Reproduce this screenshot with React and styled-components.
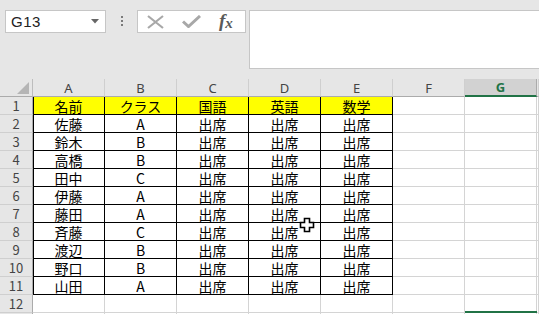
import React from 'react'
import styled, { createGlobalStyle } from 'styled-components'

const GlobalStyle = createGlobalStyle`
  html, body {
    margin: 0;
    padding: 0;
    background: #ffffff;
    overflow: hidden;
  }
`

const columns = ['A', 'B', 'C', 'D', 'E', 'F', 'G']

const header = ['名前', 'クラス', '国語', '英語', '数学']

const students = [
  ['佐藤', 'A'],
  ['鈴木', 'B'],
  ['高橋', 'B'],
  ['田中', 'C'],
  ['伊藤', 'A'],
  ['藤田', 'A'],
  ['斉藤', 'C'],
  ['渡辺', 'B'],
  ['野口', 'B'],
  ['山田', 'A'],
]

function Toolbar() {
  return (
    <Bar>
      <NameBox>
        <span>G13</span>
        <svg width="8" height="5" viewBox="0 0 8 5">
          <path d="M0 0 L8 0 L4 4.5 Z" fill="#666" />
        </svg>
      </NameBox>
      <Dots>
        <i />
        <i />
        <i />
      </Dots>
      <FormulaButtons>
        <svg width="17" height="14" viewBox="0 0 17 14">
          <path d="M1 1 L16 13 M16 1 L1 13" stroke="#a8a8a8" strokeWidth="2.2" fill="none" />
        </svg>
        <svg width="19" height="13" viewBox="0 0 19 13">
          <path d="M1 6.5 L6.5 11.5 L18 1" stroke="#a8a8a8" strokeWidth="3" fill="none" />
        </svg>
        <Fx>
          f<sub>x</sub>
        </Fx>
      </FormulaButtons>
      <FormulaInput />
    </Bar>
  )
}

function Sheet() {
  const rows = []
  // row 13 only peeks in by a pixel, so its number is left out
  for (let r = 1; r <= 13; r++) {
    let values = []
    if (r === 1) values = header
    else if (r <= 11) {
      const s = students[r - 2]
      values = [s[0], s[1], '出席', '出席', '出席']
    }
    rows.push(
      <React.Fragment key={r}>
        <RowHead>{r < 13 ? r : ''}</RowHead>
        {columns.map((c, i) => {
          const inTable = r <= 11 && i < 5
          return (
            <Cell
              key={c}
              $table={inTable}
              $yellow={r === 1 && i < 5}
              $first={i === 0 && r <= 11}
              $selected={c === 'G' && r === 13}
            >
              {values[i] || ''}
            </Cell>
          )
        })}
        <Cell />
      </React.Fragment>
    )
  }

  return (
    <Grid>
      <Corner>
        <svg width="12" height="12" viewBox="0 0 12 12">
          <path d="M12 0 L12 12 L0 12 Z" fill="#b5b5b5" />
        </svg>
      </Corner>
      {columns.map((c) => (
        <ColHead key={c} $active={c === 'G'}>
          {c}
        </ColHead>
      ))}
      <ColHead />
      {rows}
    </Grid>
  )
}

export default function App() {
  return (
    <Page>
      <GlobalStyle />
      <Toolbar />
      <Sheet />
      <Cursor width="16" height="16" viewBox="0 0 16 16">
        <path
          d="M5.5 1.5 H10.5 V5.5 H14.5 V10.5 H10.5 V14.5 H5.5 V10.5 H1.5 V5.5 H5.5 Z"
          fill="#fff"
          stroke="#000"
          strokeWidth="1.6"
        />
      </Cursor>
    </Page>
  )
}

const Page = styled.div`
  position: relative;
  width: 539px;
  height: 314px;
  overflow: hidden;
  background: #e6e6e6;
`

const Bar = styled.div`
  display: flex;
  align-items: flex-start;
  height: 69px;
  padding: 10px 0 0 5px;
  box-sizing: border-box;
`

const NameBox = styled.div`
  display: flex;
  align-items: center;
  justify-content: space-between;
  width: 101px;
  height: 23px;
  box-sizing: border-box;
  padding: 0 6px 0 5px;
  background: #fff;
  border: 1px solid #c6c6c6;
  font-family: "Liberation Sans", Arial, sans-serif;
  font-size: 15px;
  color: #222;
  letter-spacing: 0.5px;
`

const Dots = styled.div`
  display: flex;
  flex-direction: column;
  gap: 2px;
  margin: 6px 14px 0 15px;
  i {
    display: block;
    width: 2px;
    height: 2px;
    background: #7a7a7a;
  }
`

const FormulaButtons = styled.div`
  display: flex;
  align-items: center;
  gap: 18px;
  width: 109px;
  height: 23px;
  box-sizing: border-box;
  padding: 0 0 0 9px;
  background: #fff;
  border: 1px solid #c6c6c6;
`

const Fx = styled.span`
  font-family: "Liberation Serif", "Times New Roman", serif;
  font-style: italic;
  font-weight: bold;
  font-size: 19px;
  color: #5a5a5a;
  line-height: 1;
  margin-top: -2px;
  sub {
    font-size: 15px;
    vertical-align: baseline;
    position: relative;
    top: 1px;
  }
`

const FormulaInput = styled.div`
  flex: 1;
  height: 59px;
  margin-left: 3px;
  box-sizing: border-box;
  background: #fff;
  border: 1px solid #c6c6c6;
  border-right: none;
`

const Grid = styled.div`
  display: grid;
  grid-template-columns: 33px repeat(7, 72px) 1fr;
  grid-auto-rows: 18px;
  margin-top: 10px;
  background: #fff;
`

const HeadBase = styled.div`
  box-sizing: border-box;
  display: flex;
  align-items: center;
  justify-content: center;
  background: #e6e6e6;
  color: #444;
`

const Corner = styled(HeadBase)`
  justify-content: flex-end;
  align-items: flex-end;
  padding: 0 3px 2px 0;
  border-right: 1px solid #bdbdbd;
  border-bottom: 1px solid #ababab;
`

const ColHead = styled(HeadBase)`
  font-family: "Noto Sans", "Liberation Sans", sans-serif;
  font-size: 13px;
  border-right: 1px solid ${(p) => (p.$active ? '#ababab' : '#cfcfcf')};
  border-bottom: ${(p) => (p.$active ? '2px solid #217346' : '1px solid #ababab')};
  background: ${(p) => (p.$active ? '#d2d2d2' : '#e6e6e6')};
  color: ${(p) => (p.$active ? '#217346' : '#444')};
  font-weight: ${(p) => (p.$active ? 'bold' : 'normal')};
`

const RowHead = styled(HeadBase)`
  font-family: "Noto Sans CJK JP", "Noto Sans", sans-serif;
  font-size: 13px;
  line-height: 1;
  border-right: 1px solid #ababab;
  border-bottom: 1px solid #cfcfcf;
`

const Cell = styled.div`
  box-sizing: border-box;
  display: flex;
  align-items: center;
  justify-content: center;
  padding-top: 1px;
  font-family: "Noto Sans CJK JP", sans-serif;
  font-size: 14px;
  line-height: 1;
  color: #000;
  background: ${(p) => (p.$yellow ? '#ffff00' : '#fff')};
  border-right: 1px solid ${(p) => (p.$table ? '#000' : '#d4d4d4')};
  border-bottom: 1px solid ${(p) => (p.$table ? '#000' : '#d4d4d4')};
  box-shadow: ${(p) =>
    p.$selected ? '0 -2px 0 #217346' : p.$first ? 'inset 1px 0 0 #000' : 'none'};
`

const Cursor = styled.svg`
  position: absolute;
  left: 299px;
  top: 217px;
`
